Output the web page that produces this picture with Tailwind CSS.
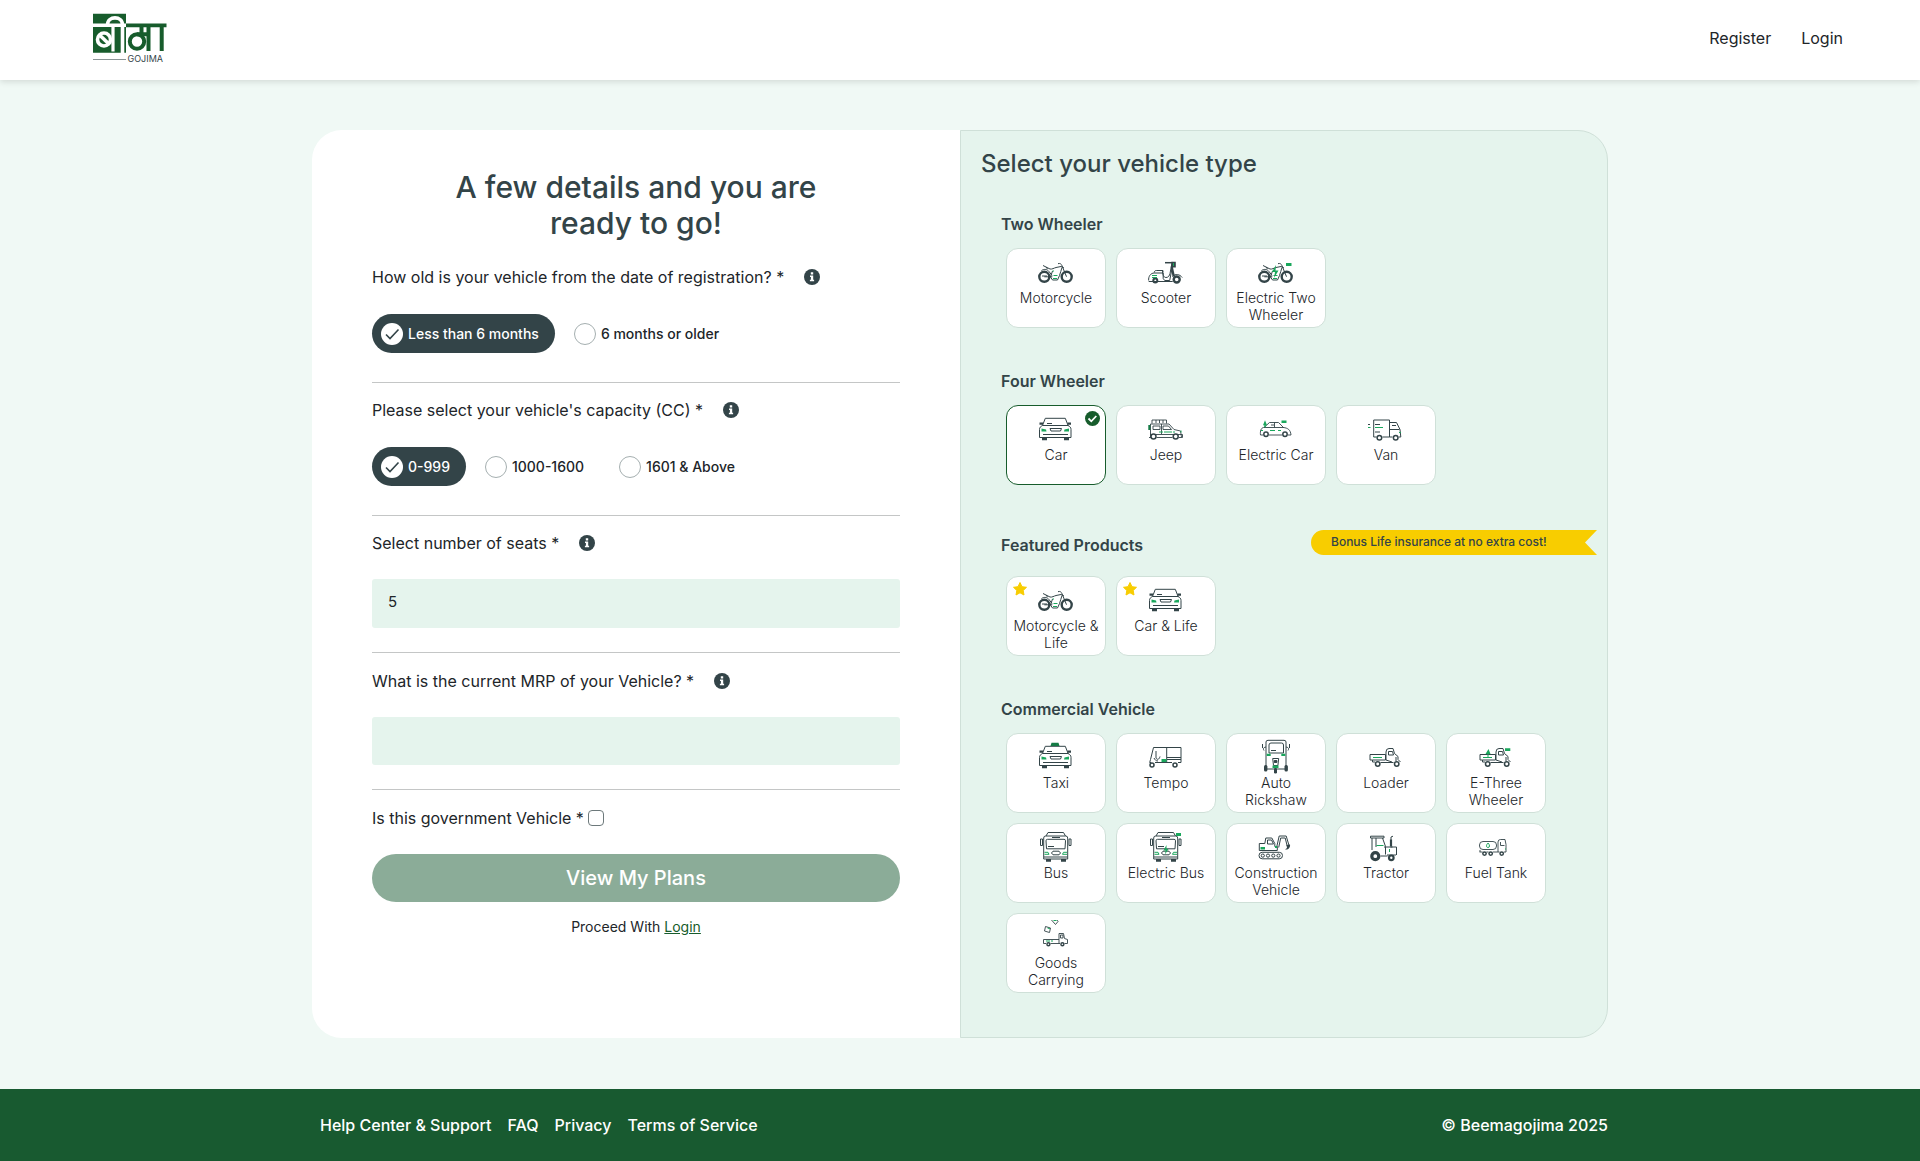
<!DOCTYPE html>
<html lang="en">
<head>
<meta charset="utf-8">
<meta name="viewport" content="width=device-width, initial-scale=1">
<title>Beemagojima</title>
<script src="https://cdn.jsdelivr.net/npm/@tailwindcss/browser@4"></script>
</head>
<body class="flex min-h-screen flex-col bg-[#f0f9f5] font-['Inter',sans-serif] text-base text-[#212529]">

<!-- Vehicle icon sprite -->
<svg class="hidden" aria-hidden="true">
  <symbol id="motorcycle" viewBox="0 0 36 36">
    <g fill="none" stroke="#334448">
      <g stroke-width="2.4"><circle cx="6.3" cy="23.8" r="5"/><circle cx="28.7" cy="23.8" r="5"/></g>
      <path d="M5 12.500l7 3.500c2 .5 4-1 6-1.500l5-1 3 1.500M8 14l1.500 2M3.500 17.500c3-2 6-1 7.500 1l3 4M6.300 23.800h8M20 10.700c2-.8 3.500.5 4 2l4.500 11M24 14.500c-1 3-1.500 5-2.500 8l-2 4.500h-5l-2-3 2-6M4 23h5"/>
    </g>
    <path stroke="#1aa75c" d="M15.500 22.500h4M15 25.500h4M14.500 18h1.500"/>
  </symbol>
  <symbol id="scooter" viewBox="0 0 36 36">
    <g fill="none" stroke="#334448">
      <circle cx="7.300" cy="27.500" r="2" stroke-width="2"/><circle cx="28.700" cy="26.500" r="3" stroke-width="2.400"/>
      <path d="M.7 27.500c-.5-4 2-7.500 5.500-7.500h9v5.500l1.500 2h5l2.300-12M6.300 19.500c0-1.500 1-2 2-2h6.700v2M.7 28.500h24M14.500 17.500c0 4 1 7 3.500 7s3.500-2 4-4l1.500-8M24.500 23.500c3-3 7-2.500 9.700 1"/>
      <path stroke-width="1.500" d="M17 9.700h8"/>
    </g>
    <path fill="#334448" d="M23.300 8.700h4.500v5.800h-2.800l2 9h-2.500l-1.700-9z"/><path stroke="#1aa75c" d="M4 22.500h5M4 24.500h5M25.500 10v3"/>
  </symbol>
  <symbol id="car" viewBox="0 0 36 36">
    <g fill="none" stroke="#334448">
      <path d="M4.500 15.500l2.800-7.200h20l2.800 7.200zM4.500 15.500c-2 1-3 2-3 4v8h31.500v-8c0-2-1-3-3-4M12 18.500h11.500l-1 2.500h-9.500zM5 24.500h25M9 13.500h5"/>
    </g>
    <path fill="#334448" d="M1.500 12.500h3.500v2.300h-3.500zM29.500 12.500h3.500v2.300h-3.500zM4 27.500h5v2.800h-5zM26 27.500h5v2.800h-5z"/>
    <path fill="#1aa75c" d="M3.500 18.500l4.500 1 .5 2h-5zM31 18.500l-4.500 1-.5 2h5z"/>
  </symbol>
  <symbol id="taxi" viewBox="0 0 36 36">
    <use href="#car"/><path fill="#147a45" d="M12.500 8l1-3.200h7l1 3.200z"/>
  </symbol>
  <symbol id="jeep" viewBox="0 0 36 36">
    <g fill="none" stroke="#334448" stroke-width=".9">
      <path d="M4 13.500v-3.500h14.500v3.500M8 10v3M11.500 10v3M15 10v3M2.500 27v-13h18.500l5 5.500 6.500 1.500 1 6M1 27.500h2M8.500 27.500h16M31 27.500h3.500v-3h-32M5 16h7v3.500h-7zM15 19.500v-3.500h5.500l3 3.500zM13.500 14v10"/>
      <circle cx="5.500" cy="26.500" r="2.500" stroke-width="1.500" fill="#fff"/><circle cx="27.700" cy="26.500" r="2.500" stroke-width="1.500" fill="#fff"/>
    </g>
    <path stroke="#1aa75c" d="M11 22h4M16 22h8M25 22h2M33 20.500v2"/><path stroke="#147a45" stroke-width="2" d="M1.300 15v5"/>
  </symbol>
  <symbol id="ecar" viewBox="0 0 36 36">
    <g fill="none" stroke="#334448" stroke-width=".9">
      <path d="M5 25h-2.500c-.5-4 .5-7 3-7.500h20c4 .5 7 2 7.500 7.500h-3M11 25h13M6 17.500l5.500-5h9l5.500 5.500M16.500 12.500v5M13 15h3"/>
      <circle cx="8" cy="24.300" r="2.200" stroke-width="1.500"/><circle cx="27" cy="24.300" r="2.200" stroke-width="1.500"/>
    </g>
    <path stroke="#1aa75c" d="M12 20.500h5M20 20.500h3M3 20.500h2"/><path fill="#1aa75c" d="M7 10.300l2 5h-1.200v2h-1.500v-2h-1.300zM23.500 10.500h5v2.500h-5z"/>
  </symbol>
  <symbol id="van" viewBox="0 0 36 36">
    <g fill="none" stroke="#334448">
      <path d="M8.500 27h-2.800v-17h15.800v17h-7M21.500 12.500h7l3.500 7 .8 7.500h-2M21.500 27h3M22 19.500h9.500M24 15.500h4M7 14.500h5M7 22h5M0 14.500h2"/>
      <circle cx="11.400" cy="27.700" r="2.300" stroke-width="1.500"/><circle cx="27.700" cy="27.700" r="2.300" stroke-width="1.500"/>
    </g>
    <path stroke="#1aa75c" d="M0 17.500h2.500M7 17.500h8M31 22.500h2"/>
  </symbol>
  <symbol id="tempo" viewBox="0 0 36 36">
    <g fill="none" stroke="#334448">
      <path d="M5.500 9.500h27.500v15h-3M7 24.500h17M5.500 9.500l-3 12-.8 3h1.500M18.700 10v14.500M19 19.500h14M19 21.500h14M6 20c1 2 2 3 4 3M8 13v7c1 2 3 2 4-1.500"/>
      <circle cx="4" cy="27" r="2" stroke-width="1.500"/><circle cx="27" cy="27" r="2" stroke-width="1.500"/>
    </g>
    <path fill="#1aa75c" d="M13.500 21h5v3h-5z"/>
  </symbol>
  <symbol id="auto" viewBox="0 0 36 36">
    <g fill="none" stroke="#334448">
      <path d="M8 31v-27q0-1.700 2-1.700h16q2 0 2 1.700v27M11 15v-8q0-2 2-2h10.500q2 0 2 2v8zM13 12.500h5M8 9c-3 .5-3 2-2 3.500M28 9c3 .5 3 2 2 3.500M4.500 6v4M31.500 6v4M8.500 31h19M14.700 20.500h6l-.8 7h-4.400z"/>
    </g>
    <path fill="#1aa75c" d="M8.700 15.700h4v2.300h-4zM23.300 15.700h4v2.300h-4zM14.500 27.500h6v2.500h-6z"/>
    <g fill="#334448"><rect x="6" y="27" width="3.400" height="6.500" rx="1.500"/><rect x="26.500" y="27" width="3.400" height="6.500" rx="1.500"/><rect x="16" y="30" width="3" height="5.500" rx="1.300"/><rect x="15.800" y="22" width="3.600" height="3" rx="1"/></g>
  </symbol>
  <symbol id="loader" viewBox="0 0 36 36">
    <g fill="none" stroke="#334448">
      <path d="M7 24h-2.500v-2h-2.500v-5.500h15.500v5.500h-13M12.500 24.500h13M18 22v-8q0-3.500 3-3.500h4l1.500 5 3.500 3v3l2.500 2.500M20.500 17v-3.500h4l1 3.500zM18 22l6 2M28 19v4"/>
      <circle cx="9.700" cy="26" r="2.200" stroke-width="1.500"/><circle cx="28.700" cy="26" r="2.200" stroke-width="1.500"/>
    </g>
    <path stroke="#1aa75c" d="M5 19.500h9"/>
  </symbol>
  <symbol id="ethree" viewBox="0 0 36 36">
    <use href="#loader"/><path fill="#1aa75c" d="M10.500 11l-3 5h2v4h1v-4h2zM27 10.300h5.300v2.700h-5.300z"/>
  </symbol>
  <symbol id="bus" viewBox="0 0 36 36">
    <g fill="none" stroke="#334448">
      <path d="M8 8l2-3.500h15.500l2 3.500M5.700 31v-21q0-2 2-2h20q2 0 2 2v21zM9.500 11.300h16.500q1.500 0 1.500 1.500l-.5 8h-18.500l-.5-8q0-1.500 1.500-1.500zM14 9.500h8M2.500 11h2v6.500h-2zM31 11h2v6.500h-2zM15 23.200h6q3 1.800 0 3.600h-6q-3-1.800 0-3.600zM10 18.500h6M6 29h23.500"/>
    </g>
    <path fill="#334448" d="M8 31h5v2.800h-5zM23 31h5v2.800h-5z"/><path stroke="#1aa75c" d="M6.500 24.300h3.500l1 2h-4.500M29 24.300h-3.500l-1 2h4.500" fill="none"/>
  </symbol>
  <symbol id="ebus" viewBox="0 0 36 36">
    <use href="#bus"/><path fill="#1aa75c" d="M18.500 17l-3 5.500h2.200l-.7 4 3.500-5.500h-2zM28 5h5v3h-5z"/>
  </symbol>
  <symbol id="excavator" viewBox="0 0 36 36">
    <g fill="none" stroke="#334448">
      <path d="M1.300 22.500v-7h5.500l1-5.500h6l3 5.500v3h2.500v4zM9.500 16v-4h4l2 4zM18.700 19l2.500-11h7l3 10M20.700 19.500l2-9.500h4.500l2 8"/>
      <rect x="1" y="24.300" width="23.500" height="6.500" rx="3.200"/>
      <circle cx="4.800" cy="27.600" r="1.600"/><circle cx="10" cy="27.600" r="1.600"/><circle cx="15.300" cy="27.600" r="1.600"/><circle cx="20.500" cy="27.600" r="1.600"/>
    </g>
    <path fill="#334448" d="M28.500 17l3.500-.5c.5 3-1.500 5.500-5 5l2-1.500z"/><path fill="#1aa75c" d="M2.500 19h4.500v2.500h-4.500zM17 18h2v2h-2z"/>
  </symbol>
  <symbol id="tractor" viewBox="0 0 36 36">
    <g fill="none" stroke="#334448">
      <path d="M2.500 8.200h13.500v1.800h-13.500zM4 10v12M8 10v9M14.500 10l3 8.500v8M16 19h12.500v8M12.500 28h7M19 27h9M22.500 19h2"/>
      <circle cx="7.300" cy="28.200" r="3.500" stroke-width="3.200"/><circle cx="23.300" cy="29.800" r="2.300" stroke-width="2.200"/>
      <path stroke-width="2.200" d="M23 18.500v-7"/><path d="M23 12v-3l2-.8"/>
    </g>
    <path stroke="#1aa75c" d="M8.500 17.500h7M21.500 21v3"/>
  </symbol>
  <symbol id="fuel" viewBox="0 0 36 36">
    <g fill="none" stroke="#334448" stroke-width=".9">
      <rect x="1.500" y="13.500" width="17" height="8" rx="3.500"/>
      <path d="M20 24v-10q0-2.500 2.500-2.500h4.500l1 5v7.500h-2M1.500 24h3M8.500 24h2M15 24h6.500M22.500 14v3.500h4M2 22v2"/>
      <g stroke-width="1.500"><circle cx="6.500" cy="25.600" r="1.700"/><circle cx="12.700" cy="25.600" r="1.700"/><circle cx="23.700" cy="25.600" r="1.700"/></g>
    </g>
    <path fill="none" stroke="#1aa75c" d="M10 15c2 2 2 4.500 0 4.500s-2-2.500 0-4.500zM27 21h1"/>
  </symbol>
  <symbol id="goods" viewBox="0 0 36 36">
    <g fill="none" stroke="#334448" stroke-width=".9">
      <path d="M8 25.500h-2.500v-4h15.500v-6h4.500l1 5 3 1v4h-3M12.500 25.500h9.500M21 21.500v4M22.500 17h2.500v3h-2.500zM7.500 8.500l5 1.500-1 4.500-5-1.500zM13.500 2l4 4.500 2.500-3-1-1.500"/>
      <circle cx="10.400" cy="26.200" r="1.500" stroke-width="1.400"/><circle cx="24.400" cy="26.200" r="1.500" stroke-width="1.400"/>
    </g>
    <path stroke="#1aa75c" d="M8 23h4M13 23h2M9.500 10l2.500.8M15.500 2.500h3"/>
  </symbol>
  <symbol id="info" viewBox="0 0 16 16">
    <circle cx="8" cy="8" r="8" fill="#334448"/><path fill="#fff" d="M6.800 3.300h2.400v2.100h-2.400zM6 6.600h3.200v4.200h.9v1.500h-4.200v-1.500h1v-2.700h-.9z"/>
  </symbol>
  <symbol id="star" viewBox="0 0 16 16"><path fill="#f8cd00" stroke="#f8cd00" stroke-linejoin="round" d="M8 1.500l2 4.200 4.500.6-3.300 3.200.8 4.500-4-2.200-4 2.200.8-4.500-3.300-3.200 4.500-.6z"/></symbol>
</svg>

<header class="flex h-20 items-center justify-between bg-white pr-[77px] pl-[93px] shadow-[0_2px_6px_rgba(0,0,0,0.12)]">
  <a href="#" aria-label="Beema Gojima" class="block pb-1">
    <svg class="h-[50px] w-[74px]" viewBox="0 0 74 50">
      <path fill="#175c2c" d="M0 .7h33v39h-33zM33 10.500h40.500v3.700h-40.500z"/>
      <g fill="none" stroke="#fff" stroke-width="3.600">
        <path d="M0 12.300h33M14.500 12c0-9.500 15-9.500 15 0v28"/><path d="M20 13v25.500" stroke-width="3.200"/>
        <circle cx="11" cy="26.500" r="6.500"/><path d="M6.500 22l9.500 9"/>
      </g>
      <g fill="none" stroke="#175c2c" stroke-width="4">
        <circle cx="44" cy="28.500" r="7.200"/><path d="M48.500 13v8M44 21.300h12M55.500 13v25M68.700 13v25"/>
      </g>
      <path stroke="#8a9596" d="M0 46.500h33"/>
      <text x="34.500" y="49" font-size="9" fill="#334448">GOJIMA</text>
    </svg>
  </a>
  <nav class="flex gap-[30px] pb-1">
    <a href="#">Register</a>
    <a href="#">Login</a>
  </nav>
</header>

<main class="flex-1 px-4 py-[50px]">
  <div class="mx-auto grid max-w-[1296px] grid-cols-1 lg:grid-cols-2">

    <form class="rounded-l-[30px] bg-white px-[60px] pt-[39px] pb-10">
      <h1 class="mx-auto mb-6 max-w-[400px] text-center text-[30px] leading-9 font-medium text-[#334448]">A few details and you are ready to go!</h1>

      <fieldset class="border-b border-[#c4c6c6] pb-[29px]">
        <legend class="mb-[25px] flex items-center gap-5 leading-6">How old is your vehicle from the date of registration? * <svg class="size-4"><use href="#info"/></svg></legend>
        <div class="flex gap-2.5 text-sm font-medium">
          <label class="flex h-[39px] items-center gap-[5px] rounded-full bg-[#334448] pr-4 pl-[9px] text-white">
            <span class="grid *:col-start-1 *:row-start-1"><input type="radio" name="age" checked class="size-[22px] appearance-none rounded-full bg-white"><svg class="size-[22px]" viewBox="0 0 22 22" fill="none" stroke="#334448" stroke-width="1.600"><path d="M5 11.500l4 4 8.500-9"/></svg></span>
            <span>Less than 6 months</span>
          </label>
          <label class="flex h-[39px] items-center gap-[5px] pr-4 pl-[9px]">
            <input type="radio" name="age" class="size-[22px] appearance-none rounded-full border border-[#a5afb0] bg-white">
            <span>6 months or older</span>
          </label>
        </div>
      </fieldset>

      <fieldset class="border-b border-[#c4c6c6] pt-[15px] pb-[29px]">
        <legend class="float-left mb-[25px] flex w-full items-center gap-5 leading-6">Please select your vehicle's capacity (CC) * <svg class="size-4"><use href="#info"/></svg></legend>
        <div class="clear-both flex gap-2.5 text-sm font-medium">
          <label class="flex h-[39px] items-center gap-[5px] rounded-full bg-[#334448] pr-4 pl-[9px] text-white">
            <span class="grid *:col-start-1 *:row-start-1"><input type="radio" name="cc" checked class="size-[22px] appearance-none rounded-full bg-white"><svg class="size-[22px]" viewBox="0 0 22 22" fill="none" stroke="#334448" stroke-width="1.600"><path d="M5 11.500l4 4 8.500-9"/></svg></span>
            <span>0-999</span>
          </label>
          <label class="flex h-[39px] items-center gap-[5px] pr-4 pl-[9px]">
            <input type="radio" name="cc" class="size-[22px] appearance-none rounded-full border border-[#a5afb0] bg-white">
            <span>1000-1600</span>
          </label>
          <label class="flex h-[39px] items-center gap-[5px] pr-4 pl-[9px]">
            <input type="radio" name="cc" class="size-[22px] appearance-none rounded-full border border-[#a5afb0] bg-white">
            <span>1601 &amp; Above</span>
          </label>
        </div>
      </fieldset>

      <div class="border-b border-[#c4c6c6] pt-[15px] pb-6">
        <label for="seats" class="mb-6 flex items-center gap-5 leading-6">Select number of seats * <svg class="size-4"><use href="#info"/></svg></label>
        <input id="seats" type="text" value="5" class="block h-[49px] w-full rounded-[3px] bg-[#e5f4ed] px-4 pb-1 text-[15px]">
      </div>

      <div class="border-b border-[#c4c6c6] pt-4 pb-6">
        <label for="mrp" class="mb-6 flex items-center gap-5 leading-6">What is the current MRP of your Vehicle? * <svg class="size-4"><use href="#info"/></svg></label>
        <input id="mrp" type="text" class="block h-12 w-full rounded-[3px] bg-[#e5f4ed] px-4 text-[15px]">
      </div>

      <div class="flex items-center gap-1 pt-4 pb-6 leading-6">
        <label for="gov">Is this government Vehicle *</label>
        <input id="gov" type="checkbox" class="size-4 appearance-none rounded-[4px] border border-[#6d797b] bg-white">
      </div>

      <button type="button" class="h-12 w-full rounded-full bg-[#8bac98] text-[20px] font-medium text-white">View My Plans</button>
      <p class="mt-3.5 text-center text-sm leading-[22px]">Proceed With <a href="#" class="text-[#175c2c] underline">Login</a></p>
    </form>

    <section class="rounded-r-[30px] border border-[#cfe0d8] bg-[#e5f4ed] pb-[3px] pl-5 text-[#334448]">
      <h2 class="mt-[15px] mb-[30px] text-[24px] leading-9 font-medium">Select your vehicle type</h2>

      <div class="mb-[41px] pr-2.5 pl-5">
        <h3 class="mb-3 leading-6 font-semibold">Two Wheeler</h3>
        <div class="flex flex-wrap gap-2.5 pl-[5px] text-sm leading-[17px] font-light text-[#212529]">
          <button class="flex h-20 w-[100px] flex-col items-center rounded-[12px] border border-[#cfe0d8] bg-white pt-1"><svg class="size-9 shrink-0"><use href="#motorcycle"/></svg>Motorcycle</button>
          <button class="flex h-20 w-[100px] flex-col items-center rounded-[12px] border border-[#cfe0d8] bg-white pt-1"><svg class="size-9 shrink-0"><use href="#scooter"/></svg>Scooter</button>
          <button class="flex h-20 w-[100px] flex-col items-center rounded-[12px] border border-[#cfe0d8] bg-white pt-1"><svg class="size-9 shrink-0"><use href="#motorcycle"/><path fill="#1aa75c" d="M18 12l-4 7h3l-1 6 4.500-7.500h-3zM28 10h5.500v3h-5.500z"/></svg>Electric Two Wheeler</button>
        </div>
      </div>

      <div class="mb-[41px] pr-2.5 pl-5">
        <h3 class="mb-3 leading-6 font-semibold">Four Wheeler</h3>
        <div class="flex flex-wrap gap-2.5 pl-[5px] text-sm leading-[17px] font-light text-[#212529]">
          <button aria-pressed="true" class="relative flex h-20 w-[100px] flex-col items-center rounded-[12px] border border-[#175c2c] bg-white pt-1"><svg class="size-9 shrink-0"><use href="#car"/></svg>Car
            <svg class="absolute top-[5px] right-[5px] size-[15px]" viewBox="0 0 15 15"><circle cx="7.500" cy="7.500" r="7.500" fill="#175c2c"/><path fill="none" stroke="#fff" stroke-width="1.800" d="M3.500 7.500l2.800 2.800 5-5.300"/></svg></button>
          <button class="flex h-20 w-[100px] flex-col items-center rounded-[12px] border border-[#cfe0d8] bg-white pt-1"><svg class="size-9 shrink-0"><use href="#jeep"/></svg>Jeep</button>
          <button class="flex h-20 w-[100px] flex-col items-center rounded-[12px] border border-[#cfe0d8] bg-white pt-1"><svg class="size-9 shrink-0"><use href="#ecar"/></svg>Electric Car</button>
          <button class="flex h-20 w-[100px] flex-col items-center rounded-[12px] border border-[#cfe0d8] bg-white pt-1"><svg class="size-9 shrink-0"><use href="#van"/></svg>Van</button>
        </div>
      </div>

      <div class="mb-[41px] pr-2.5 pl-5">
        <div class="mb-3 flex h-[38px] items-center justify-between">
          <h3 class="leading-6 font-semibold">Featured Products</h3>
          <p class="mt-1 h-[25px] w-[286px] self-start rounded-l-full bg-[#f8cd00] pl-5 text-[12px] leading-6 font-medium [clip-path:polygon(0_0,100%_0,calc(100%-12px)_50%,100%_100%,0_100%)]">Bonus Life insurance at no extra cost!</p>
        </div>
        <div class="flex flex-wrap gap-2.5 pl-[5px] text-sm leading-[17px] font-light text-[#212529]">
          <button class="relative flex h-20 w-[100px] flex-col items-center rounded-[12px] border border-[#cfe0d8] bg-white pt-1"><svg class="absolute top-1 left-[5px] size-4"><use href="#star"/></svg><svg class="size-9 shrink-0"><use href="#motorcycle"/></svg>Motorcycle &amp; Life</button>
          <button class="relative flex h-20 w-[100px] flex-col items-center rounded-[12px] border border-[#cfe0d8] bg-white pt-1"><svg class="absolute top-1 left-[5px] size-4"><use href="#star"/></svg><svg class="size-9 shrink-0"><use href="#car"/></svg>Car &amp; Life</button>
        </div>
      </div>

      <div class="mb-[41px] pr-2.5 pl-5">
        <h3 class="mb-3 leading-6 font-semibold">Commercial Vehicle</h3>
        <div class="flex flex-wrap gap-2.5 pl-[5px] text-sm leading-[17px] font-light text-[#212529]">
          <button class="flex h-20 w-[100px] flex-col items-center rounded-[12px] border border-[#cfe0d8] bg-white pt-1"><svg class="size-9 shrink-0"><use href="#taxi"/></svg>Taxi</button>
          <button class="flex h-20 w-[100px] flex-col items-center rounded-[12px] border border-[#cfe0d8] bg-white pt-1"><svg class="size-9 shrink-0"><use href="#tempo"/></svg>Tempo</button>
          <button class="flex h-20 w-[100px] flex-col items-center rounded-[12px] border border-[#cfe0d8] bg-white pt-1"><svg class="size-9 shrink-0"><use href="#auto"/></svg>Auto<br>Rickshaw</button>
          <button class="flex h-20 w-[100px] flex-col items-center rounded-[12px] border border-[#cfe0d8] bg-white pt-1"><svg class="size-9 shrink-0"><use href="#loader"/></svg>Loader</button>
          <button class="flex h-20 w-[100px] flex-col items-center rounded-[12px] border border-[#cfe0d8] bg-white pt-1"><svg class="size-9 shrink-0"><use href="#ethree"/></svg>E-Three<br>Wheeler</button>
          <button class="flex h-20 w-[100px] flex-col items-center rounded-[12px] border border-[#cfe0d8] bg-white pt-1"><svg class="size-9 shrink-0"><use href="#bus"/></svg>Bus</button>
          <button class="flex h-20 w-[100px] flex-col items-center rounded-[12px] border border-[#cfe0d8] bg-white pt-1"><svg class="size-9 shrink-0"><use href="#ebus"/></svg>Electric Bus</button>
          <button class="flex h-20 w-[100px] flex-col items-center rounded-[12px] border border-[#cfe0d8] bg-white pt-1"><svg class="size-9 shrink-0"><use href="#excavator"/></svg>Construction Vehicle</button>
          <button class="flex h-20 w-[100px] flex-col items-center rounded-[12px] border border-[#cfe0d8] bg-white pt-1"><svg class="size-9 shrink-0"><use href="#tractor"/></svg>Tractor</button>
          <button class="flex h-20 w-[100px] flex-col items-center rounded-[12px] border border-[#cfe0d8] bg-white pt-1"><svg class="size-9 shrink-0"><use href="#fuel"/></svg>Fuel Tank</button>
          <button class="flex h-20 w-[100px] flex-col items-center rounded-[12px] border border-[#cfe0d8] bg-white pt-1"><svg class="size-9 shrink-0"><use href="#goods"/></svg>Goods<br>Carrying</button>
        </div>
      </div>
    </section>
  </div>
</main>

<footer class="bg-[#185a30] px-4 py-6 leading-6 font-medium text-white">
  <div class="mx-auto flex max-w-[1296px] flex-wrap justify-between pl-2">
    <nav class="flex gap-4"><a href="#">Help Center &amp; Support</a><a href="#">FAQ</a><a href="#">Privacy</a><a href="#">Terms of Service</a></nav>
    <p>© Beemagojima 2025</p>
  </div>
</footer>
</body>
</html>
